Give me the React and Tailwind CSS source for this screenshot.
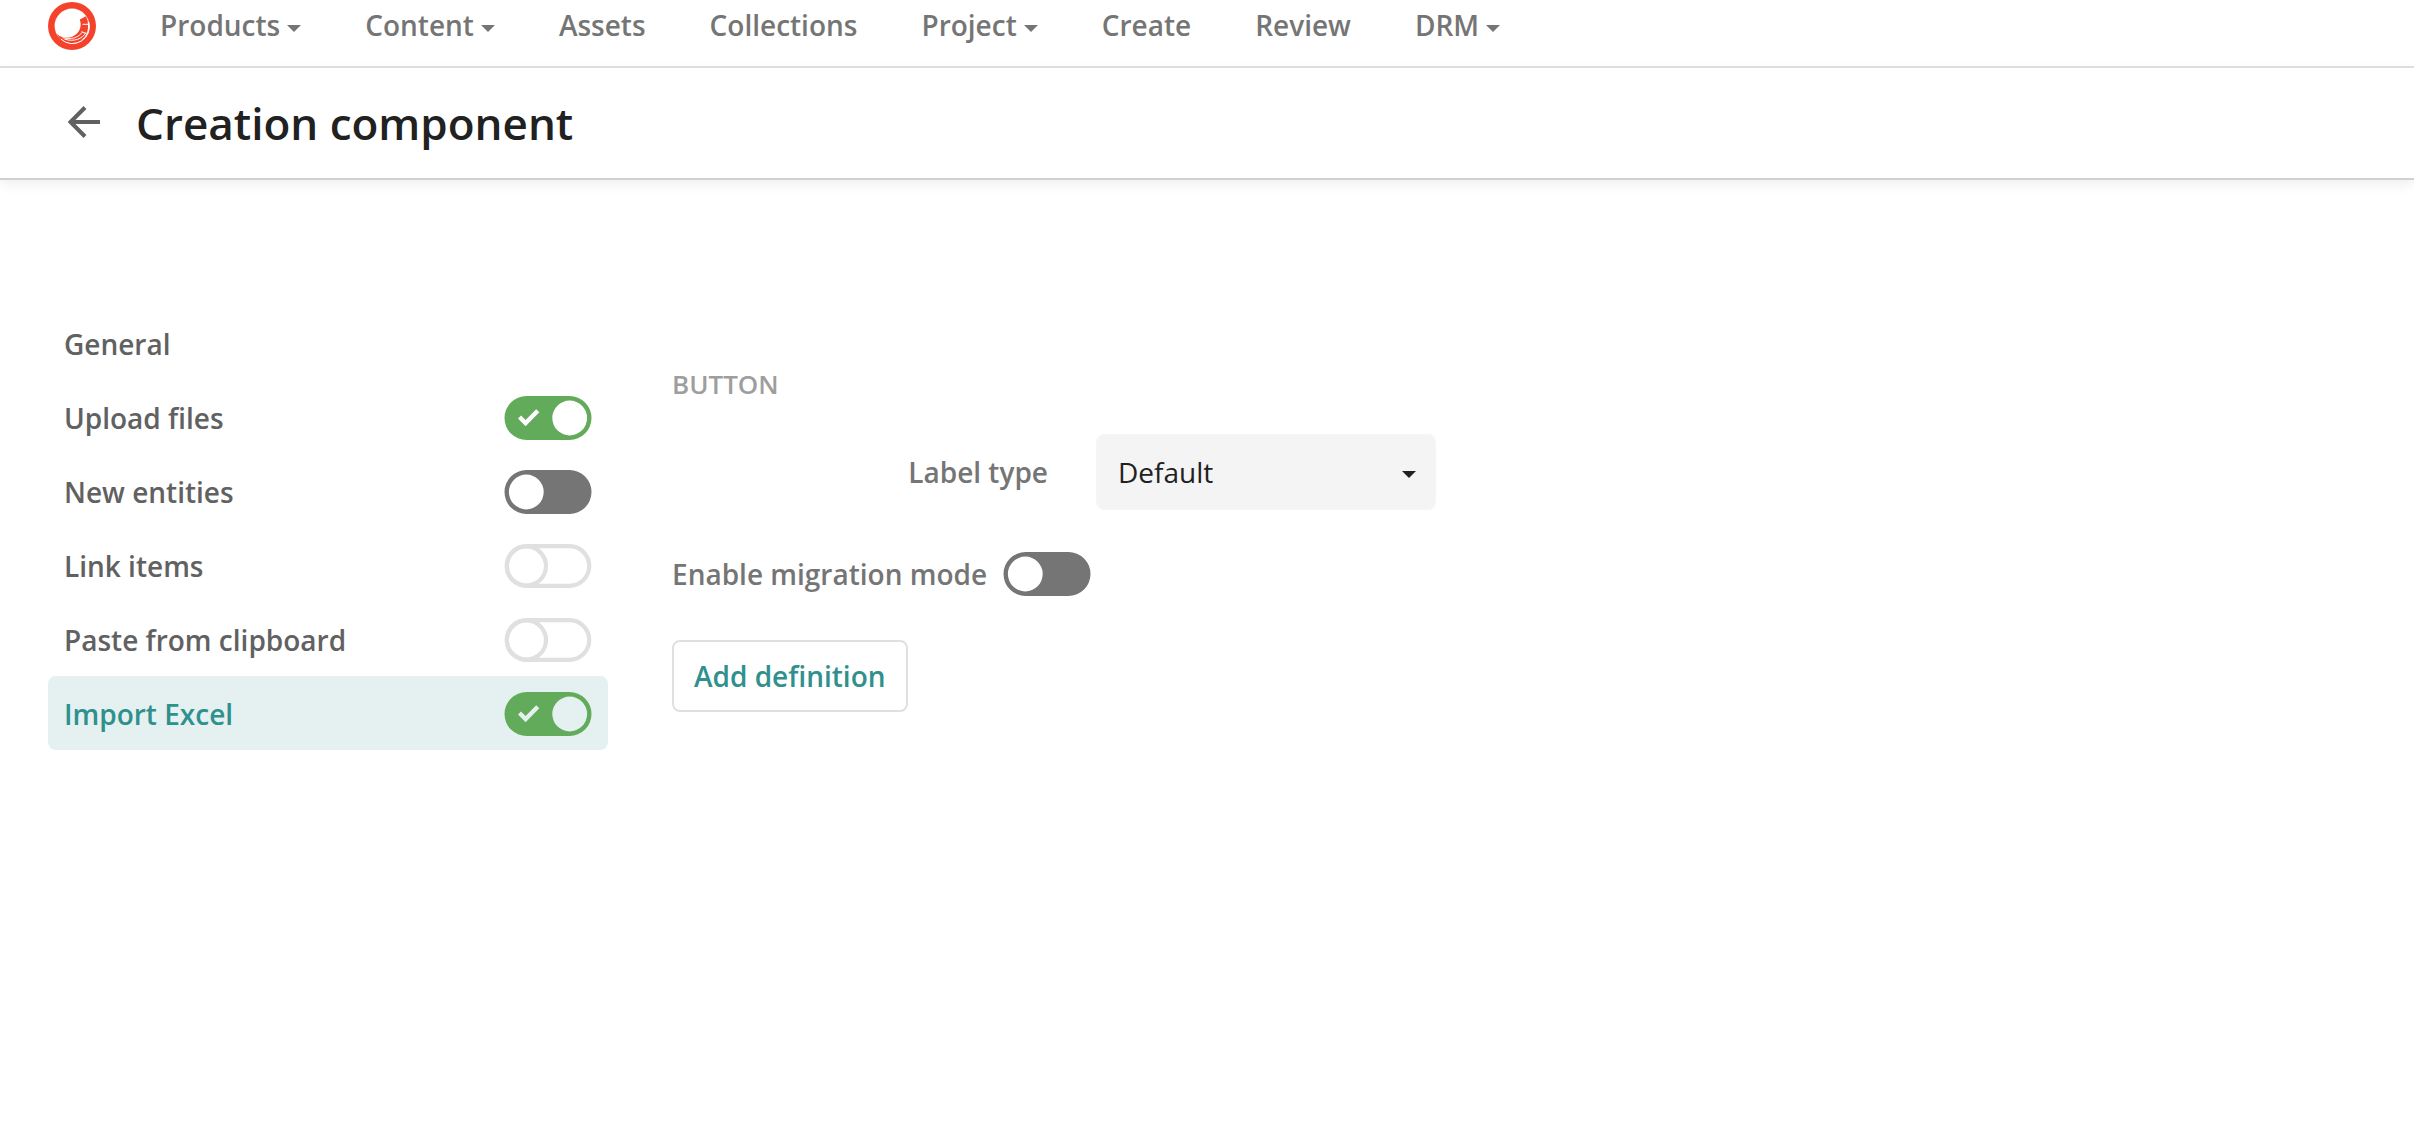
import { useState } from 'react'

const NAV = [
  { label: 'Products', menu: true },
  { label: 'Content', menu: true },
  { label: 'Assets' },
  { label: 'Collections' },
  { label: 'Project', menu: true },
  { label: 'Create' },
  { label: 'Review' },
  { label: 'DRM', menu: true },
]

const SECTIONS = [
  { id: 'general', label: 'General' },
  { id: 'upload', label: 'Upload files', toggle: true },
  { id: 'entities', label: 'New entities', toggle: true },
  { id: 'link', label: 'Link items', toggle: true, disabled: true },
  { id: 'paste', label: 'Paste from clipboard', toggle: true, disabled: true },
  { id: 'excel', label: 'Import Excel', toggle: true },
]

function Caret({ className }) {
  return (
    <svg viewBox="0 0 14 7" className={`w-3.5 h-[7px] ${className || ''}`} fill="currentColor" aria-hidden="true">
      <path d="M0 0h14L7 7z" />
    </svg>
  )
}

function Logo() {
  return (
    <svg viewBox="0 0 48 48" className="size-12" aria-hidden="true">
      <circle cx="24" cy="24" r="24" fill="#f4432a" />
      <circle cx="24" cy="24" r="17.4" fill="#fff" />
      {/* lens crescent */}
      <path d="M31.8 17.6L38 14.2A17 17 0 0 1 40 24A16.4 16.4 0 0 1 8.6 31.4C12.5 35.4 18 36.8 23.5 35C30.5 32.6 34.6 25.5 31.8 17.6z" fill="#f4432a" />
      <g fill="none" stroke="#fff">
        <path d="M40.8 20A17 17 0 0 1 13 37.2" strokeWidth="1" />
        <path d="M38 30.5C34 37 26.5 40 16.5 37.2" strokeWidth="1" />
        <path d="M34.5 30C30.5 35.5 24 38 14.5 35.6" strokeWidth=".9" />
        <path d="M34.5 22.3h6M33.5 29.6l4.8 2" strokeWidth="1" />
      </g>
    </svg>
  )
}

function Toggle({ id, checked, disabled, onChange }) {
  return (
    <span className="relative block w-22 h-11 shrink-0">
      <input id={id} type="checkbox" role="switch" checked={checked} disabled={disabled} onChange={onChange}
        className="absolute inset-0 size-full m-0 appearance-none rounded-full cursor-pointer disabled:cursor-default" />
      <svg viewBox="0 0 88 44" className="relative size-full pointer-events-none" aria-hidden="true">
        {disabled ? (
          <g fill="none" stroke="#e0e0e0" strokeWidth="4.2">
            <rect x="2.8" y="2.2" width="82.4" height="39.6" rx="19.8" />
            <circle cx="22.4" cy="22" r="19.6" />
          </g>
        ) : checked ? (
          <path fillRule="evenodd" fill="#62ab5b"
            d="M22.500 0h43a22 22 0 0 1 0 44h-43a22 22 0 0 1 0-44zM65.7 4.6a17.4 17.4 0 1 0 0 34.8a17.4 17.4 0 0 0 0-34.8zM14 22.6L21.6 30.2L35.3 16.3L32.2 13.3L21.6 24L17 19.5z" />
        ) : (
          <path fillRule="evenodd" fill="#757575"
            d="M22.500 0h43a22 22 0 0 1 0 44h-43a22 22 0 0 1 0-44zM22.3 4.6a17.4 17.4 0 1 0 0 34.8a17.4 17.4 0 0 0 0-34.8z" />
        )}
      </svg>
    </span>
  )
}

export default function App() {
  const [active, setActive]       = useState('excel')
  const [enabled, setEnabled]     = useState({ upload: true, excel: true })
  const [migration, setMigration] = useState(false)

  const flip = (id) => setEnabled(s => ({ ...s, [id]: !s[id] }))

  return (
    <div className="min-h-screen bg-white font-['Open_Sans',sans-serif] text-[28px] leading-10 text-[#757575]">
      {/* Main navigation */}
      <nav className="flex items-center gap-16 px-12 pt-0.5 pb-4 border-b-2 border-[#e0e0e0] font-semibold">
        <a href="#" aria-label="Home"><Logo /></a>
        {NAV.map(n => (
          <a key={n.label} href="#" className="flex items-center gap-[7px] pb-0.5 whitespace-nowrap">
            {n.label}
            {n.menu && <Caret className="mt-1.5" />}
          </a>
        ))}
      </nav>

      {/* Page title */}
      <header className="flex items-center gap-8 h-28 pl-16 border-b-2 border-[#d0d0d0] shadow-[0_4px_12px_rgba(0,0,0,0.07)]">
        <button type="button" aria-label="Back" className="text-[#616161] cursor-pointer">
          <svg viewBox="0 0 40 40" className="size-10" fill="none" stroke="currentColor" strokeWidth="4" aria-hidden="true">
            <path d="M36 19H7M21 4.500L6.500 19L21 33.500" />
          </svg>
        </button>
        <h1 className="text-[44px] leading-[60px] font-semibold text-[#212121]">Creation component</h1>
      </header>

      <main className="flex gap-16 px-12 pt-[126px]">
        {/* Sections */}
        <ul className="w-[560px] shrink-0 font-semibold">
          {SECTIONS.map(s => (
            <li key={s.id}
              className={`flex items-center justify-between h-[74px] px-4 pt-0.5 rounded-lg ${active === s.id ? 'bg-[#e5f1f1] text-[#2f908d]' : 'text-[#616161]'}`}>
              {s.toggle ? (
                <>
                  <label htmlFor={s.id} onClick={() => setActive(s.id)}>{s.label}</label>
                  <Toggle id={s.id} checked={!!enabled[s.id]} disabled={s.disabled} onChange={() => flip(s.id)} />
                </>
              ) : (
                <button type="button" onClick={() => setActive(s.id)} className="cursor-pointer">{s.label}</button>
              )}
            </li>
          ))}
        </ul>

        {/* Settings */}
        <section className="pt-[60px] font-semibold">
          <h2 className="text-[26px] leading-9 text-[#9e9e9e]">BUTTON</h2>
          <div className="flex items-center gap-12 mt-8">
            <label htmlFor="label-type" className="w-[376px] text-right">Label type</label>
            <div className="relative w-[340px]">
              <select id="label-type" defaultValue="default"
                className="block w-full h-[76px] pl-5 pr-14 appearance-none rounded-lg border-2 border-[#f5f5f5] bg-[#f4f4f4] font-normal text-[#212121]">
                <option value="default">Default</option>
                <option value="custom">Custom</option>
              </select>
              <Caret className="absolute right-5 top-[37px] text-[#212121] pointer-events-none" />
            </div>
          </div>
          <div className="flex items-center gap-4 mt-[42px]">
            <label htmlFor="migration">Enable migration mode</label>
            <Toggle id="migration" checked={migration} onChange={() => setMigration(v => !v)} />
          </div>
          <button type="button"
            className="mt-11 h-[72px] px-5 rounded-lg border-2 border-[#e0e0e0] text-[#2f908d] cursor-pointer">
            Add definition
          </button>
        </section>
      </main>
    </div>
  )
}
